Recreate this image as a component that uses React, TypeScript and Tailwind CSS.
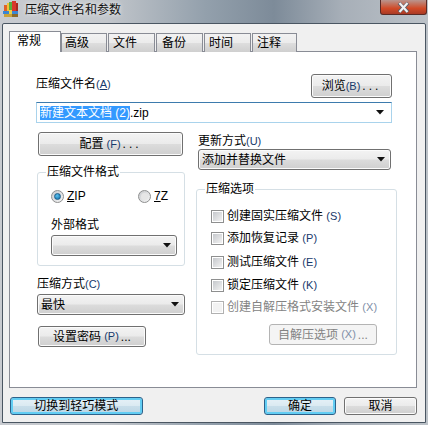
import React from "react";

const FONT = '"Liberation Sans","Noto Sans CJK SC",sans-serif';

function Hot({ children, disabled }: { children: React.ReactNode; disabled?: boolean }) {
  return <span className={`text-[11px] ${disabled ? "text-[#7f8fa8]" : "text-[#17396b]"}`}>{children}</span>;
}

function Btn({ className, children }: { className: string; children: React.ReactNode }) {
  return (
    <div className={`flex items-center justify-center rounded-[3px] border border-[#707070] bg-[linear-gradient(#f3f3f3_0%,#ebebeb_48%,#dcdcdc_52%,#cfcfcf_100%)] shadow-[inset_0_0_0_1px_#fbfbfb] text-[12px] text-black ${className}`}>
      {children}
    </div>
  );
}

function PrimaryBtn({ className, children }: { className: string; children: React.ReactNode }) {
  return (
    <div className={`flex items-center justify-center rounded-[3px] border border-[#2c628b] bg-[linear-gradient(#e6f1f7_0%,#dbeaf2_48%,#c8deea_52%,#bcd6e4_100%)] shadow-[inset_0_0_0_2px_#62cdf3] text-[12px] text-black ${className}`}>
      {children}
    </div>
  );
}

function Arrow() {
  return (
    <svg width="9" height="5" viewBox="0 0 9 5" className="shrink-0">
      <path d="M0 0H8L4 4.5Z" fill="#111" />
    </svg>
  );
}

function Select({ className, text }: { className: string; text?: string }) {
  return (
    <div className={`flex items-center justify-between rounded-[3px] border border-[#707070] bg-[linear-gradient(#f3f3f3_0%,#ebebeb_48%,#dcdcdc_52%,#cfcfcf_100%)] shadow-[inset_0_0_0_1px_#fbfbfb] pl-[3px] pr-[4px] text-[12px] text-black ${className}`}>
      <span>{text}</span>
      <Arrow />
    </div>
  );
}

function Radio({ on }: { on?: boolean }) {
  return (
    <div className="flex h-[13px] w-[13px] shrink-0 items-center justify-center rounded-full border border-[#8e8f8f] bg-[linear-gradient(135deg,#c9cbce,#f6f6f6)]">
      {on ? (
        <div className="h-[7px] w-[7px] rounded-full border border-[#1c5f8c] bg-[radial-gradient(circle_at_40%_35%,#5cc1ee,#0b6aa4)]" />
      ) : (
        <div className="h-[7px] w-[7px] rounded-full bg-[#e6e6e6]" />
      )}
    </div>
  );
}

function Check({ label, hot, disabled, className }: { label: string; hot: string; disabled?: boolean; className: string }) {
  return (
    <div className={`flex h-[16px] items-center text-[12px] ${disabled ? "text-[#838383]" : "text-black"} ${className}`}>
      <div className={`mr-[3px] flex h-[13px] w-[13px] shrink-0 items-center justify-center border bg-white ${disabled ? "border-[#b1b1b1]" : "border-[#8e8f8f]"}`}>
        <div className={`h-[9px] w-[9px] ${disabled ? "bg-[#f2f2f2]" : "bg-[linear-gradient(135deg,#c5c8cc,#f2f2f2)]"}`} />
      </div>
      <span>
        {label} <Hot disabled={disabled}>({hot})</Hot>
      </span>
    </div>
  );
}

function Group({ title, className, inner, children }: { title: string; className: string; inner: string; children: React.ReactNode }) {
  return (
    <fieldset className={`rounded-[3px] border border-[#d5dfe5] ${className}`}>
      <legend className="ml-[8px] h-[16px] px-[1px] text-[12px] leading-[16px] text-black">{title}</legend>
      <div className={inner}>{children}</div>
    </fieldset>
  );
}

function Tab({ label, className }: { label: string; className: string }) {
  return (
    <div className={`flex h-[19px] items-center border border-b-0 border-[#898c95] bg-[linear-gradient(#f2f2f2_0%,#ebebeb_50%,#dddddd_52%,#cfcfcf_100%)] text-[12px] text-black ${className}`}>
      {label}
    </div>
  );
}

function Logo() {
  return (
    <svg width="16" height="17" viewBox="0 0 16 17" className="mt-[1px] shrink-0">
      <rect x="1" y="4" width="3" height="11" fill="#e0612a" />
      <rect x="4" y="2" width="2" height="13" fill="#f0c23a" />
      <rect x="6" y="1" width="3" height="14" fill="#58ad3e" />
      <rect x="9" y="0" width="4" height="15" fill="#d8362c" />
      <rect x="13" y="2" width="2" height="11" fill="#a5281f" />
      <rect x="0" y="10" width="15" height="3" fill="#3a86d4" />
      <rect x="6" y="9" width="3" height="5" fill="#e9d24a" />
      <rect x="1" y="13" width="14" height="3" fill="#c9a23a" />
      <rect x="9" y="13" width="6" height="3" fill="#8a6a2a" />
    </svg>
  );
}

export default function App() {
  return (
    <div
      className="flex h-[425px] w-[428px] flex-col overflow-hidden bg-[linear-gradient(90deg,#c8cbd0_0%,#c2c6cb_25%,#93a0ac_48%,#7d8b99_64%,#a7afb8_80%,#bcc2c8_100%)]"
      style={{ fontFamily: FONT }}
    >
      <div className="flex h-[23px] shrink-0 items-start pl-[3px] pr-[1px]">
        <Logo />
        <div className="ml-[6px] mt-[2px] text-[12px] leading-[16px] text-[#101010] [text-shadow:0_0_4px_#fff]">压缩文件名和参数</div>
        <div className="ml-auto flex h-[15px] w-[47px] items-center justify-center rounded-b-[3px] border border-t-0 border-[#5a2a25] bg-[linear-gradient(#b9958e_0%,#c66a52_35%,#d14a27_60%,#a93a25_100%)]">
          <svg width="15" height="11" viewBox="0 0 15 11">
            <path d="M3 1L12 10 M12 1L3 10" stroke="#5a5f6a" strokeWidth="3.6" fill="none" />
            <path d="M3.5 1L11.5 10 M11.5 1L3.5 10" stroke="#f2f2f2" strokeWidth="2.2" fill="none" />
          </svg>
        </div>
      </div>

      <div className="ml-[2px] flex h-[400px] w-[424px] shrink-0 flex-col rounded-t-[2px] border border-[#4a5662] bg-[#f0f0f0] pl-[6px] pr-[8px] pt-[7px]">
        <div className="relative z-10 flex h-[21px] items-end">
          <div className="flex h-[21px] w-[52px] items-center border border-b-0 border-[#898c95] bg-white pb-[2px] pl-[7px] text-[12px] text-black">常规</div>
          <Tab label="高级" className="w-[46px] pl-[3px]" />
          <Tab label="文件" className="ml-[1px] w-[47px] pl-[4px]" />
          <Tab label="备份" className="ml-[1px] w-[47px] pl-[5px]" />
          <Tab label="时间" className="ml-[1px] w-[47px] pl-[4px]" />
          <Tab label="注释" className="ml-[1px] w-[45px] pl-[4px]" />
        </div>

        <div className="-mt-px h-[337px] w-[408px] border border-[#898c95] bg-white pt-[22px]">
          <div className="flex h-[24px] items-center justify-between pl-[26px] pr-[24px]">
            <span className="mb-[4px] text-[12px] text-black">
              压缩文件名<Hot>(<span className="underline">A</span>)</Hot>
            </span>
            <Btn className="h-[24px] w-[81px]">
              浏览<Hot>(B)</Hot>
              <span className="ml-[2px] tracking-[3px]">...</span>
            </Btn>
          </div>

          <div className="ml-[26px] mt-[4px] flex h-[21px] w-[356px] items-center justify-between border border-[#a9d3ec] border-t-[#3d7bad] bg-white pl-[3px] pr-[6px] text-[12px] text-black">
            <span>
              <span className="bg-[#3399ff] text-white">新建文本文档 (2)</span>.zip
            </span>
            <Arrow />
          </div>

          <div className="mt-[9px] flex pl-[27px]">
            <div className="flex w-[148px] flex-col">
              <Btn className="ml-[1px] h-[24px] w-[145px]">
                配置 <Hot>&nbsp;(F)</Hot>
                <span className="ml-[2px] tracking-[3px]">...</span>
              </Btn>

              <Group title="压缩文件格式" className="mt-[8px] h-[102px]" inner="pl-[13px]">
                <div className="mt-[8px] flex h-[16px] items-center text-[12px] text-black">
                  <Radio on />
                  <span className="ml-[3px] w-[71px]">
                    <span className="underline">Z</span>IP
                  </span>
                  <Radio />
                  <span className="ml-[3px]">
                    <span className="underline">7</span>Z
                  </span>
                </div>
                <div className="mt-[13px] h-[16px] text-[12px] leading-[16px] text-black">外部格式</div>
                <Select className="mt-[2px] h-[21px] w-[126px]" />
              </Group>

              <div className="mt-[10px] h-[16px] text-[12px] leading-[16px] text-black">
                压缩方式<Hot>(C)</Hot>
              </div>
              <Select className="mt-[2px] h-[21px] w-[148px]" text="最快" />
              <Btn className="ml-[1px] mt-[11px] h-[21px] w-[108px]">
                设置密码 <Hot>&nbsp;(P)</Hot>
                <span className="ml-[2px]">...</span>
              </Btn>
            </div>

            <div className="ml-[11px] flex w-[201px] flex-col pt-[1px]">
              <div className="ml-[2px] h-[16px] text-[12px] leading-[16px] text-black">
                更新方式<Hot>(U)</Hot>
              </div>
              <Select className="ml-[2px] h-[21px] w-[193px]" text="添加并替换文件" />
              <Group title="压缩选项" className="mt-[11px] h-[174px]" inner="pl-[14px]">
                <Check className="mt-[11px]" label="创建固实压缩文件" hot="S" />
                <Check className="mt-[6px]" label="添加恢复记录" hot="P" />
                <Check className="mt-[8px]" label="测试压缩文件" hot="E" />
                <Check className="mt-[7px]" label="锁定压缩文件" hot="K" />
                <Check className="mt-[6px]" label="创建自解压格式安装文件" hot="X" disabled />
                <div className="ml-[58px] mt-[9px] flex h-[21px] w-[108px] items-center justify-center rounded-[3px] border border-[#b4b4b4] bg-[#f4f4f4] text-[12px] text-[#838383]">
                  自解压选项 <Hot disabled>&nbsp;(X)</Hot>
                  <span className="ml-[2px]">...</span>
                </div>
              </Group>
            </div>
          </div>
        </div>

        <div className="mt-[9px] flex h-[18px] pl-[1px]">
          <PrimaryBtn className="h-[18px] w-[133px]">切换到轻巧模式</PrimaryBtn>
          <PrimaryBtn className="ml-[121px] h-[18px] w-[73px]">确定</PrimaryBtn>
          <Btn className="ml-[8px] h-[18px] w-[73px]">取消</Btn>
        </div>
      </div>
    </div>
  );
}
